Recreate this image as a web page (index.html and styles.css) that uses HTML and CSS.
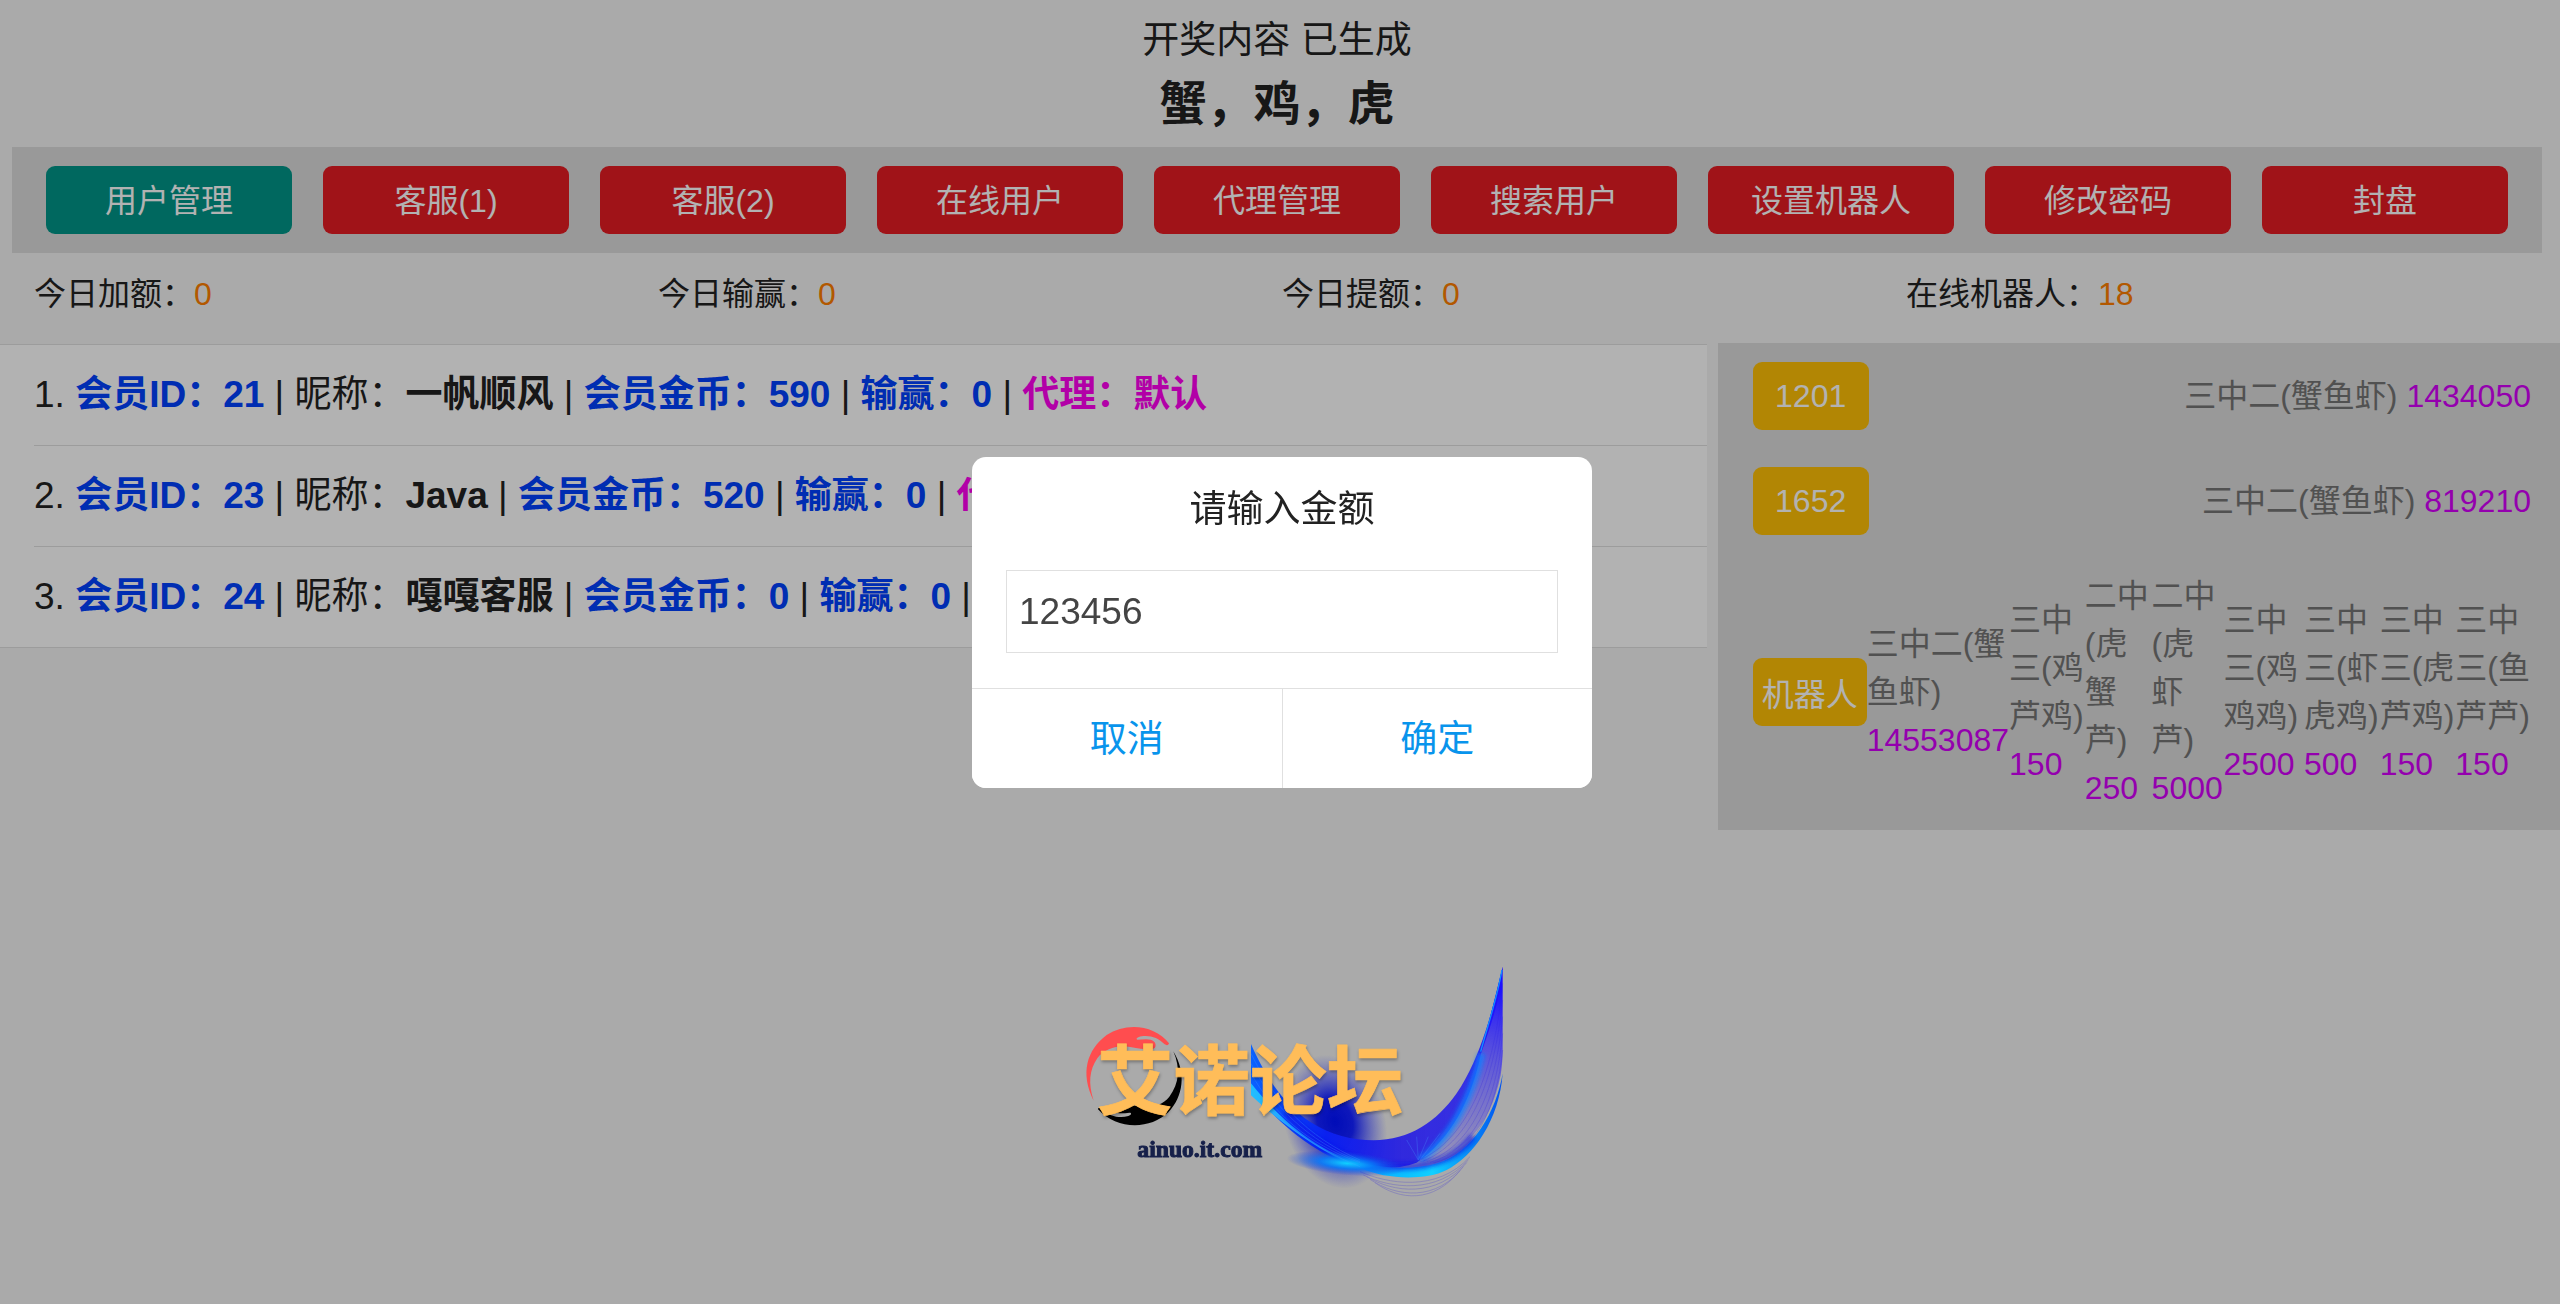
FILE: index.html
```html
<!DOCTYPE html>
<html lang="zh-CN">
<head>
  <meta charset="UTF-8">
  <meta name="viewport" content="width=device-width, initial-scale=1.0">
  <title>用户管理</title>
  <link rel="stylesheet" href="styles.css">
</head>
<body>
  <header class="header">
    <div class="status">开奖内容 已生成</div>
    <h1 class="result">蟹，鸡，虎</h1>
  </header>

  <nav class="nav">
    <button class="btn active" type="button">用户管理</button>
    <button class="btn" type="button">客服(1)</button>
    <button class="btn" type="button">客服(2)</button>
    <button class="btn" type="button">在线用户</button>
    <button class="btn" type="button">代理管理</button>
    <button class="btn" type="button">搜索用户</button>
    <button class="btn" type="button">设置机器人</button>
    <button class="btn" type="button">修改密码</button>
    <button class="btn" type="button">封盘</button>
  </nav>

  <div class="stats">
    <div>今日加额：<span class="num">0</span></div>
    <div>今日输赢：<span class="num">0</span></div>
    <div>今日提额：<span class="num">0</span></div>
    <div>在线机器人：<span class="num">18</span></div>
  </div>

  <main class="main">
    <ul class="members">
      <li>1. <b class="blue">会员ID：21</b> | 昵称：<b>一帆顺风</b> | <b class="blue">会员金币：590</b> | <b class="blue">输赢：0</b> | <b class="pink">代理：默认</b></li>
      <li>2. <b class="blue">会员ID：23</b> | 昵称：<b>Java</b> | <b class="blue">会员金币：520</b> | <b class="blue">输赢：0</b> | <b class="pink">代理：默认</b></li>
      <li>3. <b class="blue">会员ID：24</b> | 昵称：<b>嘎嘎客服</b> | <b class="blue">会员金币：0</b> | <b class="blue">输赢：0</b> | <b class="pink">代理：默认</b></li>
    </ul>

    <section class="bets">
      <div class="bet-row">
        <button class="badge" type="button">1201</button>
        <div>三中二(蟹鱼虾) <span class="money">1434050</span></div>
      </div>
      <div class="bet-row">
        <button class="badge" type="button">1652</button>
        <div>三中二(蟹鱼虾) <span class="money">819210</span></div>
      </div>
      <div class="bet-row">
        <button class="badge" type="button">机器人</button>
        <div>三中二(蟹鱼虾) <span class="money">14553087</span></div>
        <div>三中三(鸡芦鸡) <span class="money">150</span></div>
        <div>二中(虎蟹芦) <span class="money">250</span></div>
        <div>二中(虎虾芦) <span class="money">5000</span></div>
        <div>三中三(鸡鸡鸡) <span class="money">2500</span></div>
        <div>三中三(虾虎鸡) <span class="money">500</span></div>
        <div>三中三(虎芦鸡) <span class="money">150</span></div>
        <div>三中三(鱼芦芦) <span class="money">150</span></div>
      </div>
    </section>
  </main>

  <div class="overlay"></div>

  <form class="modal" role="dialog">
    <label class="modal-title" for="amount">请输入金额</label>
    <input class="modal-input" type="text" id="amount" value="123456">
    <div class="modal-buttons">
      <button type="button">取消</button>
      <button type="submit">确定</button>
    </div>
  </form>

  <svg class="logo" viewBox="0 0 1440 810" role="img" aria-label="艾诺论坛">
    <defs>
      <linearGradient id="wing" gradientUnits="userSpaceOnUse" x1="573" y1="0" x2="1328" y2="0">
        <stop offset="0" stop-color="#0a62ff"/>
        <stop offset="0.3" stop-color="#0a20f0"/>
        <stop offset="0.6" stop-color="#2a22e0" stop-opacity="0.95"/>
        <stop offset="0.85" stop-color="#2a22e8" stop-opacity="0.9"/>
        <stop offset="1" stop-color="#1c10ff"/>
      </linearGradient>
      <linearGradient id="veil" gradientUnits="userSpaceOnUse" x1="1270" y1="140" x2="1180" y2="640">
        <stop offset="0" stop-color="#1c10ff"/>
        <stop offset="0.4" stop-color="#3a30f0" stop-opacity="0.7"/>
        <stop offset="1" stop-color="#5a50e0" stop-opacity="0.3"/>
      </linearGradient>
      <linearGradient id="edge" gradientUnits="userSpaceOnUse" x1="573" y1="0" x2="1328" y2="0">
        <stop offset="0" stop-color="#20c0ff"/>
        <stop offset="0.25" stop-color="#2090ff"/>
        <stop offset="0.5" stop-color="#08b0ff"/>
        <stop offset="0.72" stop-color="#10d0ff"/>
        <stop offset="1" stop-color="#0050f0"/>
      </linearGradient>
      <radialGradient id="glow">
        <stop offset="0" stop-color="#000cb8"/>
        <stop offset="0.35" stop-color="#0610bc" stop-opacity="0.95"/>
        <stop offset="1" stop-color="#3038d0" stop-opacity="0"/>
      </radialGradient>
      <radialGradient id="flare">
        <stop offset="0" stop-color="#10d0ff"/>
        <stop offset="0.45" stop-color="#0878f8" stop-opacity="0.9"/>
        <stop offset="1" stop-color="#2040e0" stop-opacity="0"/>
      </radialGradient>
      <filter id="soft" x="-20%" y="-20%" width="140%" height="140%">
        <feGaussianBlur stdDeviation="7"/>
      </filter>
    </defs>

    <!-- glow behind the ribbon -->
    <ellipse cx="825" cy="545" rx="150" ry="205" fill="url(#glow)" transform="rotate(-18 825 545)"/>

    <!-- ribbon -->
    <path fill="url(#veil)" d="M1328 80V330C1328 350 1326 380 1322 405C1290 560 1210 650 1070 668C1160 600 1230 480 1262 330C1290 240 1310 150 1328 80Z"/>
    <path fill="url(#wing)" d="M573 312C620 420 680 500 750 545C810 585 880 600 940 601C1050 600 1130 545 1190 460C1265 350 1300 200 1328 80C1322 180 1290 260 1262 345C1235 480 1170 600 1070 668C1010 690 920 690 850 668C740 620 640 540 573 440Z"/>
    <path fill="none" stroke="#1080ff" stroke-width="22" opacity="0.8" filter="url(#soft)" d="M1265 340C1235 470 1175 595 1080 660"/>
    <path fill="none" stroke="#1090ff" stroke-width="4" d="M1326 90C1310 180 1285 250 1262 335"/>
    <path fill="url(#edge)" d="M573 430C660 540 760 620 860 655C960 690 1060 690 1130 670C1240 640 1310 510 1328 400C1318 540 1240 650 1160 690C1110 716 1030 716 970 706C900 690 840 660 780 625C700 575 630 520 573 466Z"/>
    <path fill="none" stroke="#1018e8" stroke-width="20" opacity="0.7" filter="url(#soft)" d="M680 520C780 630 900 680 1020 680S1200 640 1240 590"/>
    <ellipse cx="860" cy="670" rx="180" ry="36" fill="url(#flare)" transform="rotate(5 860 670)"/>

    <!-- thin strands -->
    <g fill="none" stroke="#2a20e0" stroke-width="2" opacity="0.35">
      <path d="M1328 130C1300 430 1210 600 1080 660"/>
      <path d="M1328 180C1300 450 1220 610 1090 663"/>
      <path d="M1328 230C1305 470 1230 620 1100 665"/>
      <path d="M1328 280C1308 490 1240 630 1110 667"/>
      <path d="M1328 330C1310 510 1245 640 1120 669"/>
      <path d="M900 695C980 730 1130 760 1230 650"/>
      <path d="M910 705C990 745 1130 765 1225 660"/>
      <path d="M920 710C1000 758 1130 775 1220 668"/>
      <path d="M930 718C1010 772 1130 785 1210 680"/>
      <path d="M945 728C1020 782 1120 790 1200 692"/>
    </g>
    <g fill="none" stroke="#4aa0ff" stroke-width="2" opacity="0.4">
      <path d="M573 340C640 480 740 590 900 660"/>
      <path d="M573 370C640 500 740 600 900 665"/>
      <path d="M573 400C640 520 740 610 900 668"/>
      <path d="M573 450C650 540 760 625 900 680"/>
      <path d="M1075 660L1105 590M1075 660L1070 590M1075 660L1040 600M1080 660L1140 580"/>
    </g>

    <!-- hands -->
    <path fill="#ff4d4f" d="M101 482C60 400 80 330 140 285C200 245 285 255 327 310C326 316 320 317 314 313C295 293 270 285 245 289C232 291 226 297 232 299C250 299 272 293 284 307C290 318 286 326 276 327C240 330 215 320 190 319C160 320 130 330 112 355C88 390 84 430 101 482Z"/>
    <path fill="#000" d="M340 334C380 400 370 470 325 517C270 570 170 570 114 508C114 502 120 503 126 509C150 530 180 535 205 528C215 524 216 518 208 518C190 520 172 522 166 515C170 500 200 495 225 497C265 500 300 505 328 470C358 430 362 385 340 334Z"/>

    <text class="logo-name" x="110" y="508">艾诺论坛</text>
    <text class="logo-url" x="232" y="650">ainuo.it.com</text>
  </svg>
</body>
</html>
```
FILE: styles.css
```css
* {
  box-sizing: border-box;
}

body {
  margin: 0;
  font-family: "Liberation Sans", Arial, "Noto Sans CJK SC", sans-serif;
  font-size: 32px;
  line-height: 48px;
  background: #f4f4f4;
  color: #222;
}

button, input {
  font-family: inherit;
  margin: 0;
}

.header {
  margin: 0 18px 0 12px;
  padding: 15px 0 7px;
  text-align: center;
}

.status {
  font-size: 37px;
  line-height: 52px;
}

.result {
  margin: 0;
  font-size: 47px;
  line-height: 73px;
}

.nav {
  display: flex;
  gap: 31px;
  margin: 0 18px 0 12px;
  padding: 19px 34px;
  background: #dbdbdb;
}

.btn, .badge {
  height: 68px;
  padding: 0 9px;
  border: none;
  border-radius: 9px;
  color: #fff;
  font-size: 32px;
  white-space: nowrap;
  cursor: pointer;
}

.btn {
  flex: 1;
  padding-bottom: 4px;
  background: #e51c23;
}

.btn.active {
  background: #009688;
}

.stats {
  display: grid;
  grid-template-columns: repeat(4, 1fr);
  padding: 0 30px 7px 34px;
  line-height: 83px;
}

.num {
  color: #ff7f00;
}

.main {
  display: grid;
  grid-template-columns: 2fr 1fr;
  align-items: start;
}

.members {
  margin: 1px 0 0;
  padding: 0 0 0 34px;
  list-style: none;
  background: #fff;
  border-top: 1px solid #e0e0e0;
  border-bottom: 1px solid #e0e0e0;
  font-size: 37px;
}

.members li {
  padding: 24px 0;
  line-height: 52px;
}

.members li + li {
  border-top: 1px solid #e0e0e0;
}

.blue {
  color: #0041ff;
}

.pink {
  color: #ff00f0;
}

.bets {
  margin-left: 11px;
  background: #dbdbdb;
  color: #757575;
}

.bet-row {
  display: flex;
  justify-content: space-between;
  align-items: center;
  padding: 19px 29px 18px 35px;
}

.badge {
  width: 116px;
  background: #ffc107;
}

.money {
  color: #d500f9;
}

.overlay {
  position: fixed;
  inset: 0;
  background: rgba(0, 0, 0, 0.3);
}

.modal {
  position: fixed;
  top: 457px;
  left: 50%;
  width: 620px;
  margin-left: -308px;
  overflow: hidden;
  background: #fff;
  border-radius: 14px;
  font-size: 37px;
  text-align: center;
}

.modal-title {
  display: block;
  padding: 27px 34px 34px;
  line-height: 52px;
}

.modal-input {
  display: block;
  width: calc(100% - 68px);
  height: 83px;
  margin: 0 34px 35px;
  padding: 0 12px;
  border: 1px solid #e0e0e0;
  background: #fff;
  color: #444;
  font-size: 37px;
}

.modal-buttons {
  display: flex;
  border-top: 1px solid #e0e0e0;
}

.modal-buttons button {
  flex: 1;
  height: 99px;
  padding: 0 0 6px;
  border: none;
  background: #fff;
  color: #0894ec;
  font-size: 37px;
  cursor: pointer;
}

.modal-buttons button + button {
  border-left: 1px solid #e0e0e0;
}

.logo {
  position: fixed;
  left: 50%;
  bottom: 94px;
  width: 480px;
  margin-left: -220px;
}

.logo-name {
  font-family: "Noto Sans CJK SC", sans-serif;
  font-size: 230px;
  font-weight: bold;
  fill: #ffbd59;
  stroke: #ffbd59;
  stroke-width: 2px;
  stroke-linejoin: round;
  filter: drop-shadow(2px 6px 5px rgba(0, 0, 0, 0.3));
}

.logo-url {
  font-family: "Liberation Serif", serif;
  font-size: 71px;
  font-weight: bold;
  fill: #16204a;
  stroke: #16204a;
  stroke-width: 3px;
}
```
